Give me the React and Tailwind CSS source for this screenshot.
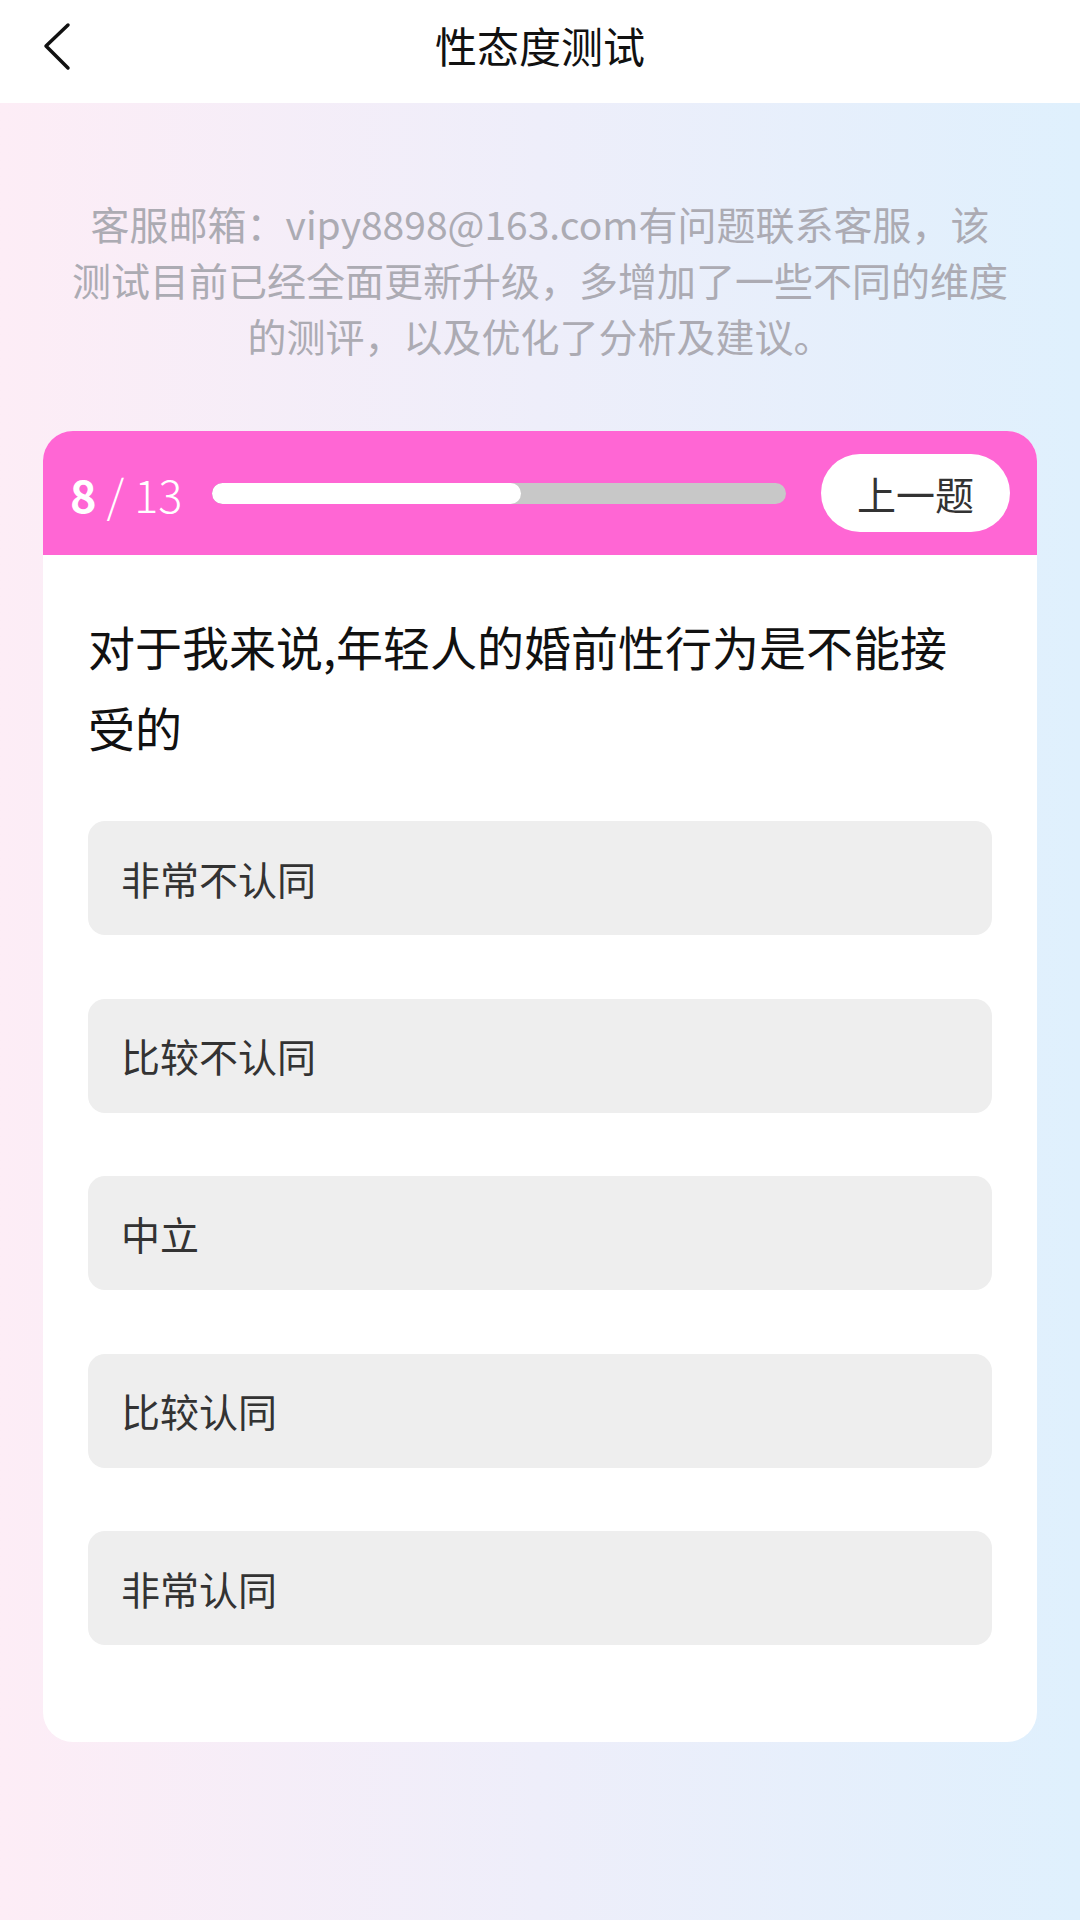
import React from "react";

const options = ["非常不认同", "比较不认同", "中立", "比较认同", "非常认同"];

function BackIcon() {
  return (
    <svg width="40" height="52" viewBox="0 0 40 52" fill="none">
      <path d="M30 4 L8 25 L30 47" stroke="#111" strokeWidth="3.5" strokeLinecap="round" strokeLinejoin="round" />
    </svg>
  );
}

export default function App() {
  const current = 8;
  const total = 13;
  const progress = ((current - 1) / total) * 100;

  return (
    <div
      className="min-h-[1920px] w-[1080px] flex flex-col bg-gradient-to-r from-[#fdedf6] via-[#eeeefa] to-[#dff0fd]"
      style={{ fontFamily: '"Noto Sans CJK SC", "Noto Sans", sans-serif' }}
    >
      <div className="h-[103px] bg-white relative flex items-center justify-center pb-[14px]">
        <div className="absolute left-[38px] top-[21px]">
          <BackIcon />
        </div>
        <p className="text-[42px] text-[#111] leading-none">性态度测试</p>
      </div>

      <p className="pt-[92px] px-[40px] text-center text-[39px] leading-[56px] text-[#acabb3]">
        客服邮箱：vipy8898@163.com有问题联系客服，该
        <br />
        测试目前已经全面更新升级，多增加了一些不同的维度
        <br />
        的测评，以及优化了分析及建议。
      </p>

      <div className="mt-[68px] mx-[43px] rounded-[30px] overflow-hidden bg-white">
        <div className="h-[124px] bg-[#ff66d4] flex items-center pl-[27px] pr-[27px]">
          <p className="text-[45px] text-white leading-none w-[106px] whitespace-nowrap">
            <span className="font-semibold">{current}</span>
            <span className="font-light"> / {total}</span>
          </p>
          <div className="flex-1 ml-[36px] mr-[35px] h-[21px] rounded-full bg-[#c8c8c8] overflow-hidden">
            <div className="h-full rounded-full bg-white" style={{ width: `${progress}%` }} />
          </div>
          <button className="w-[189px] h-[78px] rounded-full bg-white text-[39px] text-[#333] leading-none">
            上一题
          </button>
        </div>

        <div className="pt-[50px] px-[45px] pb-[97px]">
          <p className="text-[47px] leading-[81px] text-[#111]">
            对于我来说,年轻人的婚前性行为是不能接
            <br />
            受的
          </p>
          <div className="mt-[54px] flex flex-col gap-[63.5px]">
            {options.map((opt) => (
              <div
                key={opt}
                className="h-[114px] rounded-[17px] bg-[#eeeeee] flex items-center pl-[33px] text-[39px] text-[#333]"
              >
                {opt}
              </div>
            ))}
          </div>
        </div>
      </div>
    </div>
  );
}
